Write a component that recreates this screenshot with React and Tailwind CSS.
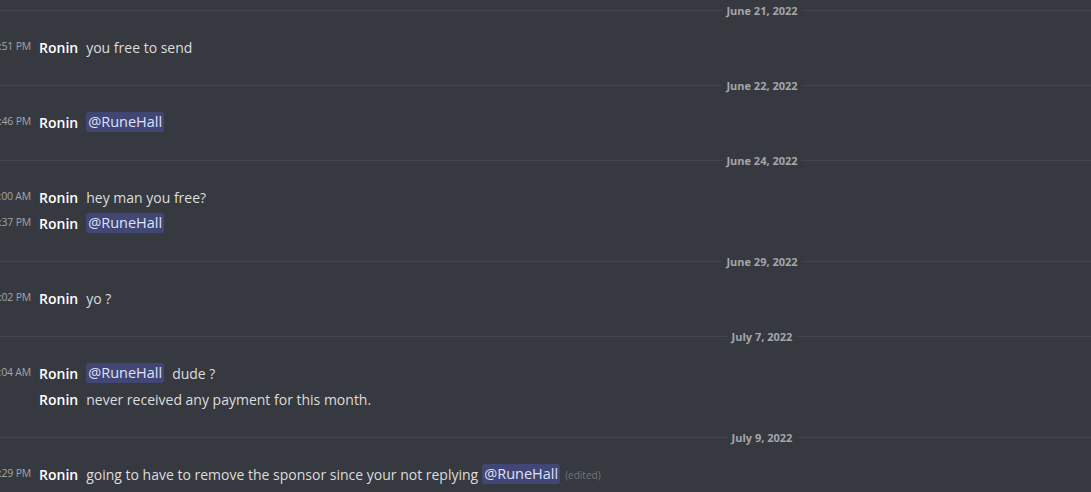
import React from "react";

const sections = [
  { date: "June 21, 2022", rows: [{ t: "12:51 PM", parts: [{ text: "you free to send" }] }] },
  { date: "June 22, 2022", rows: [{ t: "12:46 PM", parts: [{ m: "@RuneHall" }] }] },
  {
    date: "June 24, 2022",
    rows: [
      { t: "10:00 AM", parts: [{ text: "hey man you free?" }] },
      { t: "12:37 PM", parts: [{ m: "@RuneHall" }] },
    ],
  },
  { date: "June 29, 2022", rows: [{ t: "10:02 PM", parts: [{ text: "yo ?" }] }] },
  {
    date: "July 7, 2022",
    rows: [
      { t: "10:04 AM", parts: [{ m: "@RuneHall" }, { text: "dude ?" }] },
      { t: "", parts: [{ text: "never received any payment for this month." }] },
    ],
  },
  {
    date: "July 9, 2022",
    rows: [
      {
        t: "12:29 PM",
        parts: [
          { text: "going to have to remove the sponsor since your not replying" },
          { m: "@RuneHall", tight: true },
          { edited: true },
        ],
      },
    ],
  },
];

function Divider({ label }) {
  return (
    <div className="relative h-px bg-[#42454b]">
      <span className="absolute left-[762px] top-1/2 -translate-x-1/2 -translate-y-1/2 bg-[#36393f] px-1 text-[11px] font-bold leading-[14px] text-[#a3a6aa] whitespace-nowrap">
        {label}
      </span>
    </div>
  );
}

function Row({ row }) {
  return (
    <div className="flex h-[26px] items-center whitespace-nowrap">
      <span className="-ml-[28px] w-[59px] shrink-0 text-right text-[10.5px] tracking-[-0.2px] text-[#a3a6aa]">
        {row.t}
      </span>
      <span className="ml-[8px] text-[14px] font-semibold text-white">Ronin</span>
      {row.parts.map((p, i) =>
        p.m ? (
          <span
            key={i}
            className={`${p.tight ? "ml-[4px]" : "ml-[8px]"} rounded-[3px] bg-[#414675] px-[2px] text-[14.5px] font-medium leading-[20px] text-[#dee0fc]`}
          >
            {p.m}
          </span>
        ) : p.edited ? (
          <span key={i} className="ml-[5px] mt-[2px] text-[10px] text-[#72767d]">
            (edited)
          </span>
        ) : (
          <span key={i} className="ml-[8px] text-[14px] text-[#dcddde]">
            {p.text}
          </span>
        )
      )}
    </div>
  );
}

export default function App() {
  return (
    <div
      className="h-[492px] w-[1091px] overflow-hidden bg-[#36393f] pt-[10px]"
      style={{ fontFamily: '"Open Sans", "Noto Sans", sans-serif' }}
    >
      {sections.map((s, i) => (
        <div key={i}>
          <Divider label={s.date} />
          <div className="pt-[23px] pb-[25px]">
            {s.rows.map((r, j) => (
              <Row key={j} row={r} />
            ))}
          </div>
        </div>
      ))}
    </div>
  );
}
